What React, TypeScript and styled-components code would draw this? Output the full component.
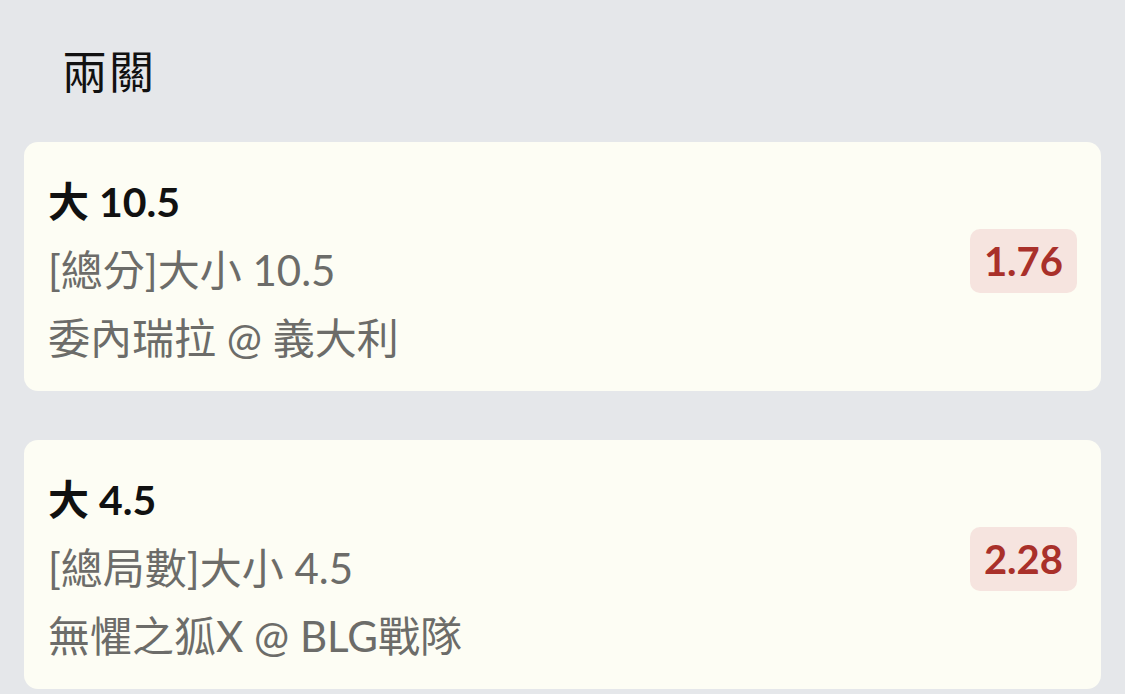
import React from "react";
import styled, { createGlobalStyle } from "styled-components";

const GlobalStyle = createGlobalStyle`
  html, body {
    margin: 0;
    padding: 0;
    background: #e5e7ea;
  }
  body {
    font-family: Lato, "Noto Sans CJK TC", sans-serif;
    -webkit-font-smoothing: antialiased;
  }
`;

const Page = styled.div`
  width: 1125px;
  min-height: 694px;
  box-sizing: border-box;
  padding: 40px 24px 0 24px;
  display: flex;
  flex-direction: column;
`;

const Heading = styled.h1`
  margin: 0 0 38px 38px;
  font-size: 45px;
  font-weight: 400;
  line-height: 64px;
  color: #111;
  letter-spacing: 2px;
`;

const List = styled.div`
  display: flex;
  flex-direction: column;
  gap: 49px;
`;

const Card = styled.div`
  background: #fdfdf4;
  border-radius: 14px;
  padding: 26px 24px 19px 24px;
  display: flex;
  align-items: center;
  justify-content: space-between;
`;

const Info = styled.div`
  display: flex;
  flex-direction: column;
`;

const Title = styled.div`
  font-size: 41px;
  font-weight: 700;
  color: #111;
  line-height: 68px;
`;

const Sub = styled.div`
  font-size: 42px;
  font-weight: 400;
  color: #6c6c69;
  line-height: 68px;
`;

const Odds = styled.div`
  background: #f6e4df;
  color: #a9302a;
  border-radius: 10px;
  font-size: 40px;
  font-weight: 700;
  line-height: 64px;
  padding: 0 14px;
  margin-bottom: 18px;
  text-align: center;
`;

type Bet = { title: string; market: string; match: string; odds: string };

const bets: Bet[] = [
  { title: "大 10.5", market: "[總分]大小 10.5", match: "委內瑞拉 @ 義大利", odds: "1.76" },
  { title: "大 4.5", market: "[總局數]大小 4.5", match: "無懼之狐X @ BLG戰隊", odds: "2.28" },
];

export default function App() {
  return (
    <>
      <GlobalStyle />
      <Page>
        <Heading>兩關</Heading>
        <List>
          {bets.map((b) => (
            <Card key={b.title}>
              <Info>
                <Title>{b.title}</Title>
                <Sub>{b.market}</Sub>
                <Sub>{b.match}</Sub>
              </Info>
              <Odds>{b.odds}</Odds>
            </Card>
          ))}
        </List>
      </Page>
    </>
  );
}
